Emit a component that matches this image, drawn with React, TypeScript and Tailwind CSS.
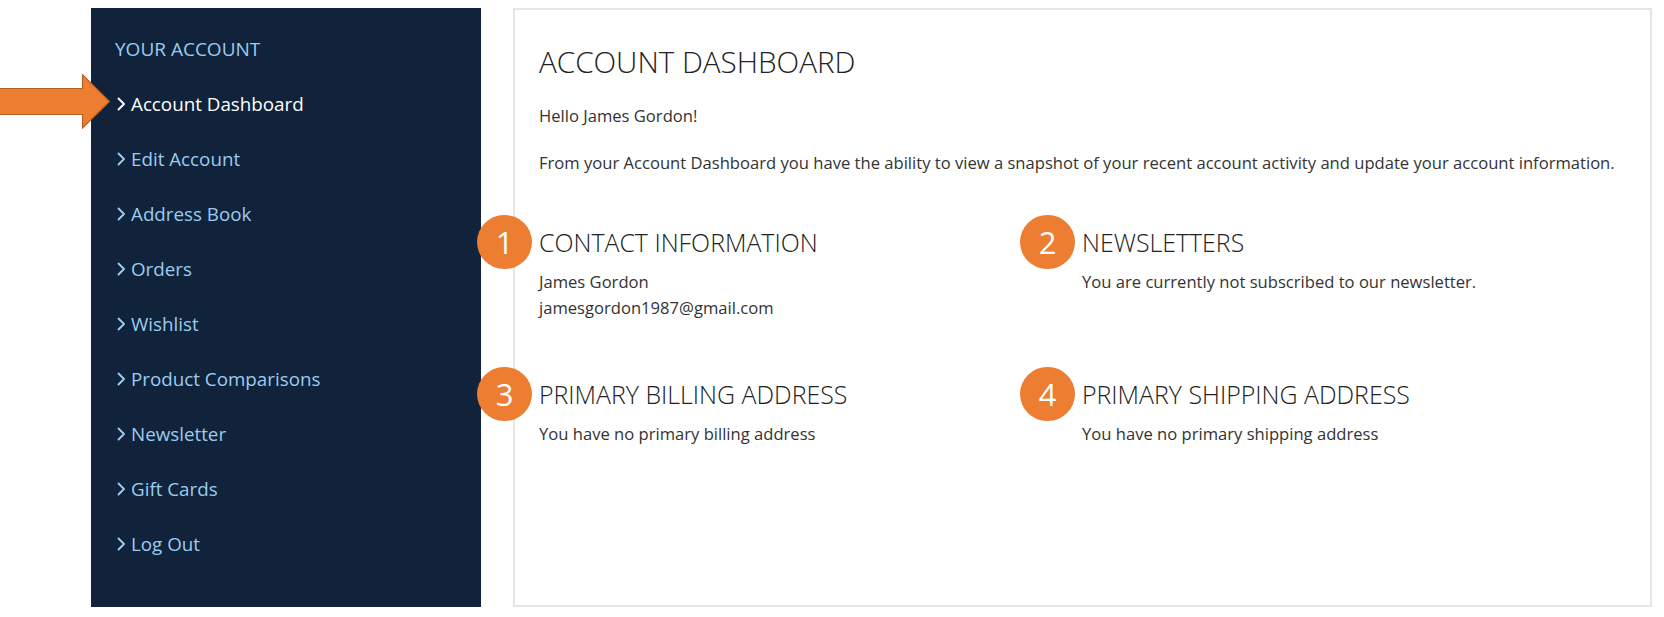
import React from "react";

const navItems = [
  "Account Dashboard",
  "Edit Account",
  "Address Book",
  "Orders",
  "Wishlist",
  "Product Comparisons",
  "Newsletter",
  "Gift Cards",
  "Log Out",
];

function Chevron({ color }: { color: string }) {
  return (
    <svg width="9" height="14" viewBox="0 0 9 14" className="shrink-0 -mt-[1px]">
      <path d="M1.5 1.5 L7 7 L1.5 12.5" fill="none" stroke={color} strokeWidth="1.9" strokeLinecap="round" strokeLinejoin="round" />
    </svg>
  );
}

function Badge({ n }: { n: number }) {
  return (
    <div className="absolute left-[-62px] top-1/2 -translate-y-1/2 w-[55px] h-[54px] rounded-full bg-[#ed7d31] flex items-center justify-center text-white text-[31px] leading-none">
      {n}
    </div>
  );
}

function Section({ n, title, lines }: { n: number; title: string; lines: string[] }) {
  return (
    <div>
      <div className="relative">
        <Badge n={n} />
        <h2 className="text-[24.9px] font-[350] leading-[30px] text-[#222]">{title}</h2>
      </div>
      <div className="mt-[12px] text-[16.6px] leading-[26px] text-[#333]">
        {lines.map((l) => (
          <div key={l}>{l}</div>
        ))}
      </div>
    </div>
  );
}

export default function App() {
  return (
    <div
      className="relative w-[1664px] h-[617px] bg-white flex pl-[91px] pt-[8px] gap-[32px]"
      style={{ fontFamily: '"Open Sans", "Noto Sans", sans-serif' }}
    >
      {/* sidebar */}
      <aside className="w-[390px] h-[599px] bg-[#10233a] pl-[24px] pt-[14px]">
        <div className="h-[55px] flex items-center text-[19px] text-[#9ccbf0]">YOUR ACCOUNT</div>
        {navItems.map((item, i) => {
          const active = i === 0;
          const color = active ? "#ffffff" : "#9ccbf0";
          return (
            <div key={item} className="h-[55px] flex items-center pl-[2px] gap-[5px]">
              <Chevron color={color} />
              <span className={`text-[18.8px] ${active ? "text-white" : "text-[#9ccbf0]"}`}>{item}</span>
            </div>
          );
        })}
      </aside>

      {/* dashboard panel */}
      <main className="w-[1139px] h-[599px] border-2 border-[#e5e5e5] pl-[24px] pt-[34px]">
        <h1 className="text-[29.6px] font-light leading-[36px] text-[#222]">ACCOUNT DASHBOARD</h1>
        <p className="mt-[24px] text-[16.6px] leading-[24px] text-[#333]">Hello James Gordon!</p>
        <p className="mt-[23px] text-[16.6px] leading-[24px] text-[#333]">
          From your Account Dashboard you have the ability to view a snapshot of your recent account activity and update your account information.
        </p>
        <div className="mt-[52px] grid grid-cols-[543px_1fr] gap-y-[58px]">
          <Section n={1} title="CONTACT INFORMATION" lines={["James Gordon", "jamesgordon1987@gmail.com"]} />
          <Section n={2} title="NEWSLETTERS" lines={["You are currently not subscribed to our newsletter."]} />
          <Section n={3} title="PRIMARY BILLING ADDRESS" lines={["You have no primary billing address"]} />
          <Section n={4} title="PRIMARY SHIPPING ADDRESS" lines={["You have no primary shipping address"]} />
        </div>
      </main>

      {/* pointer arrow */}
      <svg className="absolute left-0 top-[74px]" width="111" height="55" viewBox="0 0 111 55">
        <polygon
          points="-1,14.5 82.5,14.5 82.5,0.8 109.5,27.5 82.5,54 82.5,40.5 -1,40.5"
          fill="#ed7d31"
          stroke="#b5601f"
          strokeWidth="1.2"
        />
      </svg>
    </div>
  );
}
